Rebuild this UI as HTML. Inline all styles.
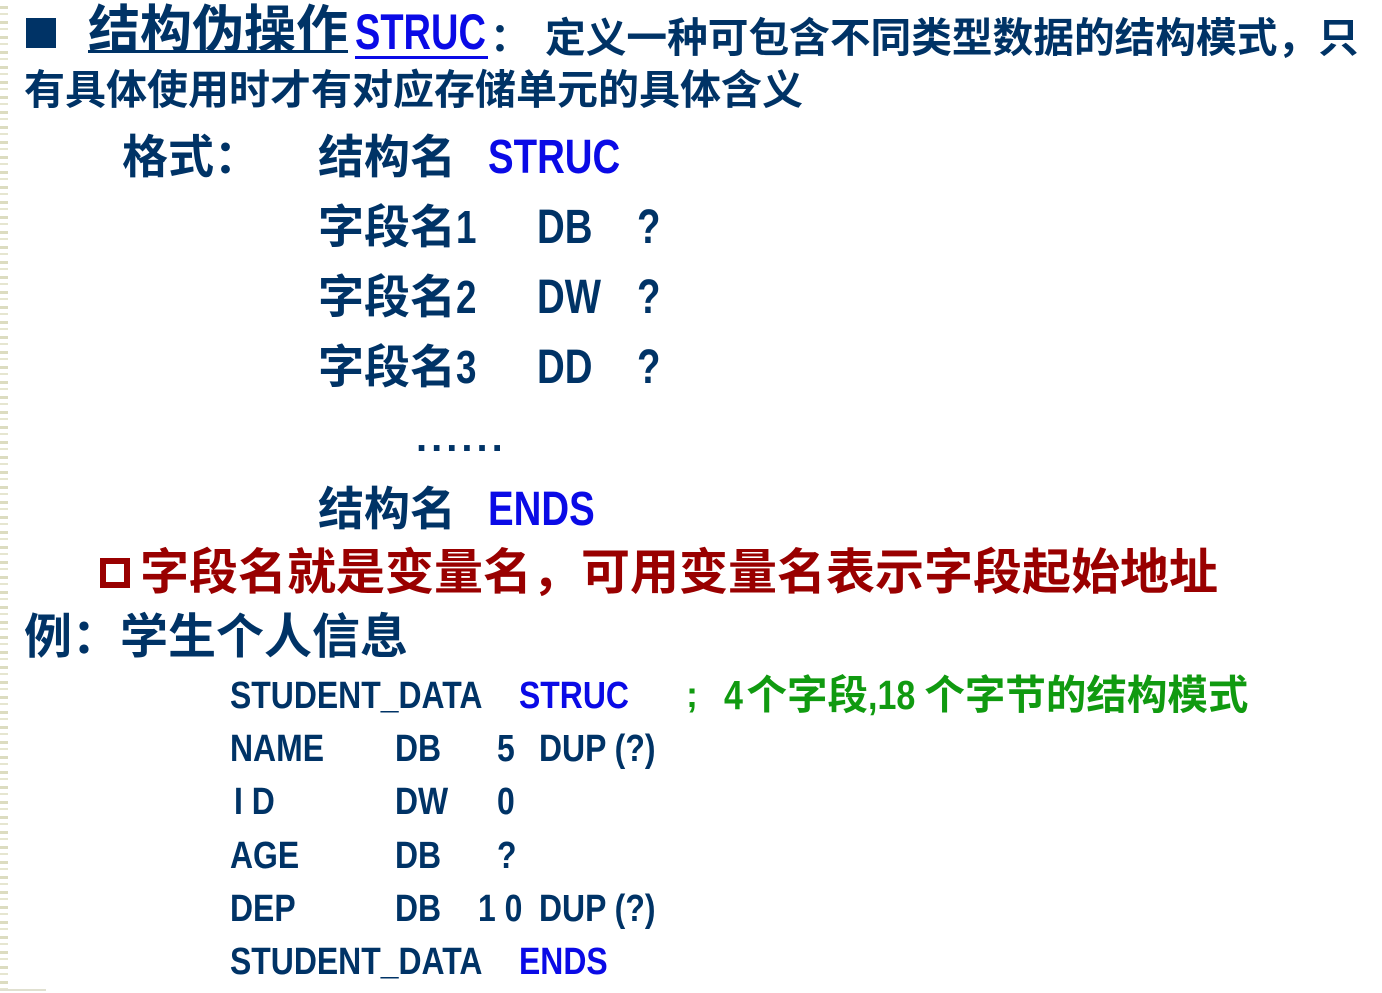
<!DOCTYPE html>
<html><head><meta charset="utf-8"><style>
body{margin:0;width:1382px;height:993px;background:#fff;position:relative;overflow:hidden;font-family:"Liberation Sans","Noto Sans CJK SC",sans-serif;font-weight:bold;color:#003366}
.s{position:absolute;white-space:pre;line-height:1}
.n{display:inline-block;transform:scaleX(.8);transform-origin:0 0}
.c .n{transform:scaleX(.84)}
.b{color:#0a0ae6}.g{color:#109a10}.r{color:#990000}
.stripe{position:absolute;left:0;top:0;width:8px;height:993px;background:repeating-linear-gradient(#fff 0 6px,#dcdcc0 6px 9px,#fff 9px 13px,#e6e6d0 13px 15px)}
</style></head><body>
<div class="stripe"></div>
<div class="s" style="left:26px;top:18px;width:30px;height:30px;background:#003366"></div>
<div class="s" style="left:88px;top:5px;font-size:52px;text-decoration:underline;text-decoration-thickness:3px">结构伪操作</div>
<div class="s b" style="left:355px;top:7px;font-size:50px;width:133px;height:49px;border-bottom:3px solid #0a0ae6"><span class="n" style="transform:scaleX(.76)">STRUC</span></div>
<div class="s" style="left:490px;top:18px;font-size:40px">：</div>
<div class="s" style="left:545px;top:18px;font-size:40.7px">定义一种可包含不同类型数据的结构模式，只</div>
<div class="s" style="left:24px;top:70px;font-size:41px">有具体使用时才有对应存储单元的具体含义</div>
<div class="s" style="left:122px;top:134px;font-size:46px">格式：</div>
<div class="s" style="left:318px;top:134px;font-size:46px">结构名</div>
<div class="s b" style="left:488px;top:134px;font-size:48px"><span class="n">STRUC</span></div>
<div class="s" style="left:318px;top:204px;font-size:46px">字段名<span class="n">1</span></div>
<div class="s" style="left:537px;top:204px;font-size:48px"><span class="n">DB</span></div>
<div class="s" style="left:637px;top:204px;font-size:48px"><span class="n">?</span></div>
<div class="s" style="left:318px;top:274px;font-size:46px">字段名<span class="n">2</span></div>
<div class="s" style="left:537px;top:274px;font-size:48px"><span class="n">DW</span></div>
<div class="s" style="left:637px;top:274px;font-size:48px"><span class="n">?</span></div>
<div class="s" style="left:318px;top:344px;font-size:46px">字段名<span class="n">3</span></div>
<div class="s" style="left:537px;top:344px;font-size:48px"><span class="n">DD</span></div>
<div class="s" style="left:637px;top:344px;font-size:48px"><span class="n">?</span></div>
<div class="s" style="left:416px;top:418px;font-size:40px;letter-spacing:4px">......</div>
<div class="s" style="left:318px;top:486px;font-size:46px">结构名</div>
<div class="s b" style="left:488px;top:486px;font-size:48px"><span class="n">ENDS</span></div>
<div class="s r" style="left:100px;top:558px;width:30px;height:30px;box-sizing:border-box;border:6px solid #990000"></div>
<div class="s r" style="left:140px;top:549px;font-size:49px">字段名就是变量名，可用变量名表示字段起始地址</div>
<div class="s" style="left:24px;top:614px;font-size:48px">例：学生个人信息</div>

<div class="c">
<div class="s" style="left:230px;top:677px;font-size:38px"><span class="n">STUDENT_DATA</span></div>
<div class="s b" style="left:519px;top:677px;font-size:38px"><span class="n">STRUC</span></div>
<div class="s g" style="left:686px;top:677px;font-size:36px">;</div>
<div class="s g" style="left:724px;top:675px;font-size:40.5px"><span class="n">4</span>个字段<span class="n">,18</span>个字节的结构模式</div>

<div class="s" style="left:230px;top:730px;font-size:38px"><span class="n">NAME</span></div>
<div class="s" style="left:395px;top:730px;font-size:38px"><span class="n">DB</span></div>
<div class="s" style="left:497px;top:730px;font-size:38px"><span class="n">5</span></div>
<div class="s" style="left:539px;top:730px;font-size:38px"><span class="n">DUP (?)</span></div>

<div class="s" style="left:234px;top:783px;font-size:38px"><span class="n">I D</span></div>
<div class="s" style="left:395px;top:783px;font-size:38px"><span class="n">DW</span></div>
<div class="s" style="left:497px;top:783px;font-size:38px"><span class="n">0</span></div>

<div class="s" style="left:230px;top:837px;font-size:38px"><span class="n">AGE</span></div>
<div class="s" style="left:395px;top:837px;font-size:38px"><span class="n">DB</span></div>
<div class="s" style="left:497px;top:837px;font-size:38px"><span class="n">?</span></div>

<div class="s" style="left:230px;top:890px;font-size:38px"><span class="n">DEP</span></div>
<div class="s" style="left:395px;top:890px;font-size:38px"><span class="n">DB</span></div>
<div class="s" style="left:478px;top:890px;font-size:38px"><span class="n">1 0</span></div>
<div class="s" style="left:539px;top:890px;font-size:38px"><span class="n">DUP (?)</span></div>

<div class="s" style="left:230px;top:943px;font-size:38px"><span class="n">STUDENT_DATA</span></div>
<div class="s b" style="left:519px;top:943px;font-size:38px"><span class="n">ENDS</span></div>
</div>
<div class="s" style="left:0;top:989px;width:46px;height:2px;background:#e0e0d0"></div>
</body></html>
